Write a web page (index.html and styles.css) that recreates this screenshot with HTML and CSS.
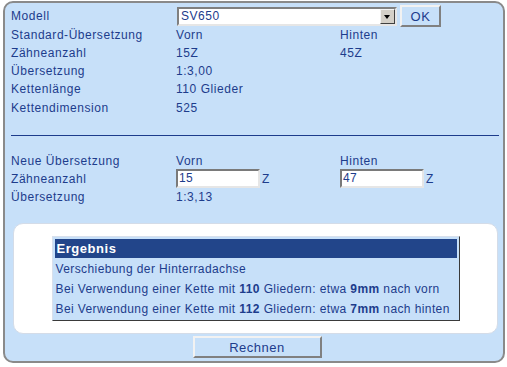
FILE: index.html
```html
<!DOCTYPE html>
<html lang="de">
<head>
    <title>Übersetzung</title>
    <meta http-equiv="Content-Type" content="text/html; charset=UTF-8" />
    <link rel="stylesheet" href="styles.css">
</head>
<body>
<div class="panel">
    <div class="row-model">
        <span class="label">Modell</span>
        <div class="select">
            <span class="select-text">SV650</span>
            <span class="select-arrow"></span>
        </div>
        <button class="btn btn-ok">OK</button>
    </div>
    <div class="row"><span>Standard-Übersetzung</span><span>Vorn</span><span>Hinten</span></div>
    <div class="row"><span>Zähneanzahl</span><span>15Z</span><span>45Z</span></div>
    <div class="row"><span>Übersetzung</span><span>1:3,00</span><span></span></div>
    <div class="row"><span>Kettenlänge</span><span>110 Glieder</span><span></span></div>
    <div class="row row-last"><span>Kettendimension</span><span>525</span><span></span></div>

    <div class="divider"></div>

    <div class="row row-new"><span>Neue Übersetzung</span><span>Vorn</span><span>Hinten</span></div>
    <div class="row row-input">
        <span>Zähneanzahl</span>
        <span class="field"><span class="input">15</span>Z</span>
        <span class="field"><span class="input">47</span>Z</span>
    </div>
    <div class="row"><span>Übersetzung</span><span>1:3,13</span><span></span></div>

    <div class="result-box">
        <table class="result">
            <tr><th>Ergebnis</th></tr>
            <tr><td>Verschiebung der Hinterradachse</td></tr>
            <tr><td>Bei Verwendung einer Kette mit <b>110</b> Gliedern: etwa <b>9mm</b> nach vorn</td></tr>
            <tr><td>Bei Verwendung einer Kette mit <b>112</b> Gliedern: etwa <b>7mm</b> nach hinten</td></tr>
        </table>
    </div>

    <div class="actions">
        <button class="btn btn-calc">Rechnen</button>
    </div>
</div>
</body>
</html>
```

FILE: styles.css
```css
* {
    box-sizing: border-box;
}

body {
    margin: 1px 0 0 3px;
    background-color: #fff;
    font-family: "Liberation Sans", Arial, sans-serif;
    font-size: 12px;
    letter-spacing: 0.55px;
    color: #1d3c8c;
}

.panel {
    width: 502px;
    border: 2px solid #8a8a8a;
    border-radius: 10px;
    background-color: #c7e0f9;
    padding: 3px 0 3px 6px;
}

/* rows of label / Vorn / Hinten */
.row {
    display: grid;
    grid-template-columns: 165px 164px 1fr;
    align-items: center;
    height: 18px;
    line-height: 18px;
    white-space: nowrap;
}

.row-last {
    height: 19px;
    align-items: end;
}

.row-model {
    display: flex;
    align-items: center;
    height: 20px;
    line-height: 18px;
}

.row-model .label {
    width: 166px;
}

.select {
    display: flex;
    align-items: center;
    width: 220px;
    height: 19px;
    background-color: #fff;
    border: 2px solid;
    border-color: #808080 #e6e6e6 #e6e6e6 #808080;
}

.select-text {
    flex: 1;
    padding-left: 2px;
}

.select-arrow {
    position: relative;
    width: 15px;
    height: 15px;
    background-color: #d4d0c8;
    border: 1px solid;
    border-color: #f4f4f4 #404040 #404040 #f4f4f4;
}

.select-arrow::after {
    content: "";
    position: absolute;
    left: 3px;
    top: 5px;
    border-left: 3.5px solid transparent;
    border-right: 3.5px solid transparent;
    border-top: 4px solid #000;
}

.btn {
    font-family: "Liberation Sans", Arial, sans-serif;
    color: #1d3c8c;
    background-color: #c7e0f9;
    border: 2px solid;
    border-color: #f2f2f2 #808080 #808080 #f2f2f2;
    padding: 0;
    letter-spacing: 0.5px;
}

.btn-ok {
    width: 41px;
    height: 22px;
    margin-left: 3px;
    font-size: 13px;
}

.divider {
    height: 1px;
    background-color: #1d3c8c;
    margin: 18px 4px 16px 0;
}

.row-new {
    height: 17px;
}

.row-input {
    height: 19px;
}

.field {
    display: flex;
    align-items: center;
    gap: 2px;
}

.input {
    width: 84px;
    height: 19px;
    line-height: 15px;
    padding-left: 1px;
    background-color: #fff;
    border: 2px solid;
    border-color: #7a7a7a #e6e6e6 #e6e6e6 #7a7a7a;
    color: #1d3c8c;
    letter-spacing: 0.3px;
}

/* result table */
.result-box {
    display: flex;
    justify-content: center;
    margin: 17px 5px 0 2px;
    padding: 12px 0;
    background-color: #fff;
    border: 1px solid #d4dce8;
    border-radius: 10px;
}

.result {
    width: 408px;
    border-collapse: separate;
    border-spacing: 2px;
    border: 1px solid;
    border-color: #d8e0ec #3a3a3a #3a3a3a #d8e0ec;
    background-color: #c7e0f9;
}

.result th {
    height: 19px;
    padding: 0 2px;
    text-align: left;
    font-size: 13px;
    color: #fff;
    background-color: #22458a;
}

.result td {
    height: 18px;
    line-height: 18px;
    padding: 0 1px;
    white-space: nowrap;
    letter-spacing: 0.4px;
}

.actions {
    display: flex;
    justify-content: center;
    margin-top: 2px;
}

.btn-calc {
    width: 129px;
    height: 22px;
    font-size: 13px;
}
```
